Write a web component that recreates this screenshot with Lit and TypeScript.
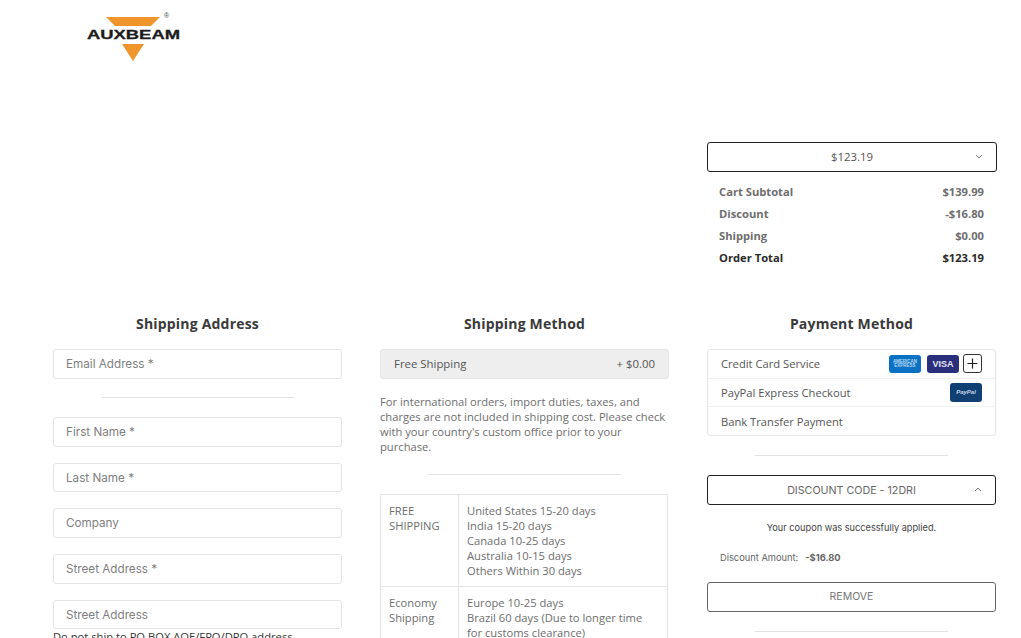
import { LitElement, html, css, svg } from "lit";
import { customElement } from "lit/decorators.js";

const chevron = (up: boolean) => html`<svg class="chev" width="8" height="5" viewBox="0 0 8 5" fill="none" stroke="#666" stroke-width=".9">
  <path d=${up ? "M1 4 4 1l3 3" : "M1 1l3 3 3-3"}></path></svg>`;

@customElement("app-root")
export class AppRoot extends LitElement {
  static styles = css`
    :host { display: block; width: 1021px; height: 638px; overflow: hidden; background: #fff; font-family: "Open Sans", sans-serif; color: #333; }
    .page { padding: 0 25px 0 53px; }
    .logo { display: block; width: 100px; height: 64px; margin-left: 34px; padding-top: 5px; }
    .top { display: flex; justify-content: flex-end; padding-top: 73px; }
    .summary { width: 289px; }
    .select { position: relative; display: flex; align-items: center; justify-content: center; height: 30px; box-sizing: border-box; padding-bottom: 1px; border: 1px solid #222; border-radius: 3px; margin-right: -1px; font-size: 11.4px; color: #555; }
    .chev { position: absolute; right: 13px; top: 11px; }
    .totals { padding: 9px 12px 0; }
    .total { display: flex; justify-content: space-between; height: 22px; line-height: 22px; font-size: 11.2px; font-weight: 700; color: #6e6e6e; }
    .total.strong { color: #2a2a2a; }
    .cols { display: grid; grid-template-columns: repeat(3, 289px); column-gap: 38px; padding-top: 45px; }
    h2 { margin: 0 0 15px; height: 20px; line-height: 20px; font-size: 14px; font-weight: 700; letter-spacing: .2px; text-align: center; color: #3a3a3a; }
    .field { box-sizing: border-box; height: 29.6px; line-height: 28px; padding: 0 12px; border: 1px solid #e4e4e4; border-radius: 3px; font-family: Inter, sans-serif; font-size: 11.7px; color: #808080; margin-bottom: 16px; }
    .field.tight { margin-bottom: 0; }
    .rule { width: 193px; height: 1px; background: #e2e2e2; margin: 19px auto; }
    .rule.form-rule { margin: 18.4px auto 19.2px; }
    .note { font-size: 11.2px; line-height: 15px; color: #333; white-space: nowrap; }
    .method { display: flex; justify-content: space-between; align-items: center; box-sizing: border-box; height: 29.6px; padding: 0 13px; background: #eee; border: 1px solid #e6e6e6; border-radius: 3px; font-size: 11.4px; color: #555; }
    .para { margin: 15px 0 0; font-size: 11.2px; line-height: 15px; color: #6e6e6e; }
    .rule.para-rule { margin: 20px auto 19px; }
    table { border-collapse: collapse; width: 288px; font-size: 11.2px; line-height: 15px; color: #6e6e6e; }
    td { border: 1px solid #e4e4e4; padding: 8px; vertical-align: top; }
    td:first-child { width: 61px; }
    .list { border: 1px solid #e6e6e6; border-radius: 3px; box-sizing: border-box; height: 87px; }
    .row { display: flex; align-items: center; justify-content: space-between; box-sizing: border-box; height: 28.6px; padding: 0 13px; font-size: 11.2px; color: #555; border-bottom: 1px solid #f0f0f0; }
    .row:last-child { border-bottom: 0; }
    .cards { display: flex; gap: 6px; align-items: center; }
    .card { display: flex; align-items: center; justify-content: center; width: 32px; height: 18px; border-radius: 3px; color: #fff; font-family: "Liberation Sans", sans-serif; font-weight: 700; }
    .amex { background: #0a72c4; font-size: 4.5px; line-height: 4px; text-align: center; color: #b9d8f0; }
    .visa { background: #2a2f7c; font-size: 9px; color: #e4e6f4; }
    .pal { background: #0f3f73; font-size: 6px; font-style: italic; height: 19px; color: #c9d6e6; }
    .plus { display: flex; width: 19px; height: 19px; box-sizing: border-box; border: 1px solid #333; border-radius: 3px; margin-left: -2px; }
    .coupon { position: relative; display: flex; align-items: center; justify-content: center; height: 30px; box-sizing: border-box; border: 1px solid #222; border-radius: 3px; font-family: Inter, sans-serif; font-size: 10.7px; color: #666; }
    .msg { margin-top: 17px; text-align: center; font-family: Inter, sans-serif; font-size: 9.2px; line-height: 12px; color: #444; }
    .amount { margin-top: 18px; padding-left: 13px; font-family: Inter, sans-serif; font-size: 9.3px; line-height: 12px; color: #666; display: flex; gap: 7px; }
    .amount b { color: #666; }
    .remove { display: flex; align-items: center; justify-content: center; margin-top: 18px; height: 30px; box-sizing: border-box; padding-bottom: 1px; border: 1px solid #666; border-radius: 3px; font-family: Inter, sans-serif; font-size: 10.5px; color: #777; }
  `;

  render() {
    return html`<div class="page">
      <svg class="logo" viewBox="0 0 100 54" aria-label="Auxbeam">
        <path d="M19 7h54l-9 9H28z" fill="#f0952b"></path>
        <path d="M35 34h22L46 51z" fill="#f0952b"></path>
        ${svg`<text x="0" y="29" textLength="93" lengthAdjust="spacingAndGlyphs" font-family="Liberation Sans" font-weight="700" font-size="13" fill="#1c1c1c" stroke="#1c1c1c" stroke-width=".3">AUXBEAM</text>
        <text x="77" y="8" font-family="Liberation Sans" font-size="7" fill="#444">®</text>`}
      </svg>
      <div class="top">
        <div class="summary">
          <div class="select">$123.19 ${chevron(false)}</div>
          <div class="totals">
            <div class="total"><span>Cart Subtotal</span><span>$139.99</span></div>
            <div class="total"><span>Discount</span><span>-$16.80</span></div>
            <div class="total"><span>Shipping</span><span>$0.00</span></div>
            <div class="total strong"><span>Order Total</span><span>$123.19</span></div>
          </div>
        </div>
      </div>
      <div class="cols">
        <section>
          <h2>Shipping Address</h2>
          <div class="field tight">Email Address *</div>
          <div class="rule form-rule"></div>
          <div class="field">First Name *</div>
          <div class="field">Last Name *</div>
          <div class="field">Company</div>
          <div class="field">Street Address *</div>
          <div class="field tight">Street Address</div>
          <div class="note">Do not ship to PO BOX AOE/FPO/DPO address</div>
        </section>
        <section>
          <h2>Shipping Method</h2>
          <div class="method"><span>Free Shipping</span><span>+ $0.00</span></div>
          <p class="para">For international orders, import duties, taxes, and charges are not included in shipping cost. Please check with your country's custom office prior to your purchase.</p>
          <div class="rule para-rule"></div>
          <table>
            <tr><td>FREE SHIPPING</td><td>United States 15-20 days<br />India 15-20 days<br />Canada 10-25 days<br />Australia 10-15 days<br />Others Within 30 days</td></tr>
            <tr><td>Economy Shipping</td><td>Europe 10-25 days<br />Brazil 60 days (Due to longer time for customs clearance)</td></tr>
          </table>
        </section>
        <section>
          <h2>Payment Method</h2>
          <div class="list">
            <div class="row"><span>Credit Card Service</span>
              <span class="cards">
                <span class="card amex">AMERICAN<br />EXPRESS</span>
                <span class="card visa">VISA</span>
                <span class="plus"><svg width="17" height="17" viewBox="0 0 17 17" stroke="#222" stroke-width="1.2"><path d="M8.5 3.5v10M3.5 8.5h10"></path></svg></span>
              </span>
            </div>
            <div class="row"><span>PayPal Express Checkout</span><span class="card pal">PayPal</span></div>
            <div class="row"><span>Bank Transfer Payment</span></div>
          </div>
          <div class="rule"></div>
          <div class="coupon">DISCOUNT CODE - 12DRI ${chevron(true)}</div>
          <div class="msg">Your coupon was successfully applied.</div>
          <div class="amount"><span>Discount Amount:</span><b>-$16.80</b></div>
          <div class="remove">REMOVE</div>
          <div class="rule"></div>
        </section>
      </div>
    </div>`;
  }
}
